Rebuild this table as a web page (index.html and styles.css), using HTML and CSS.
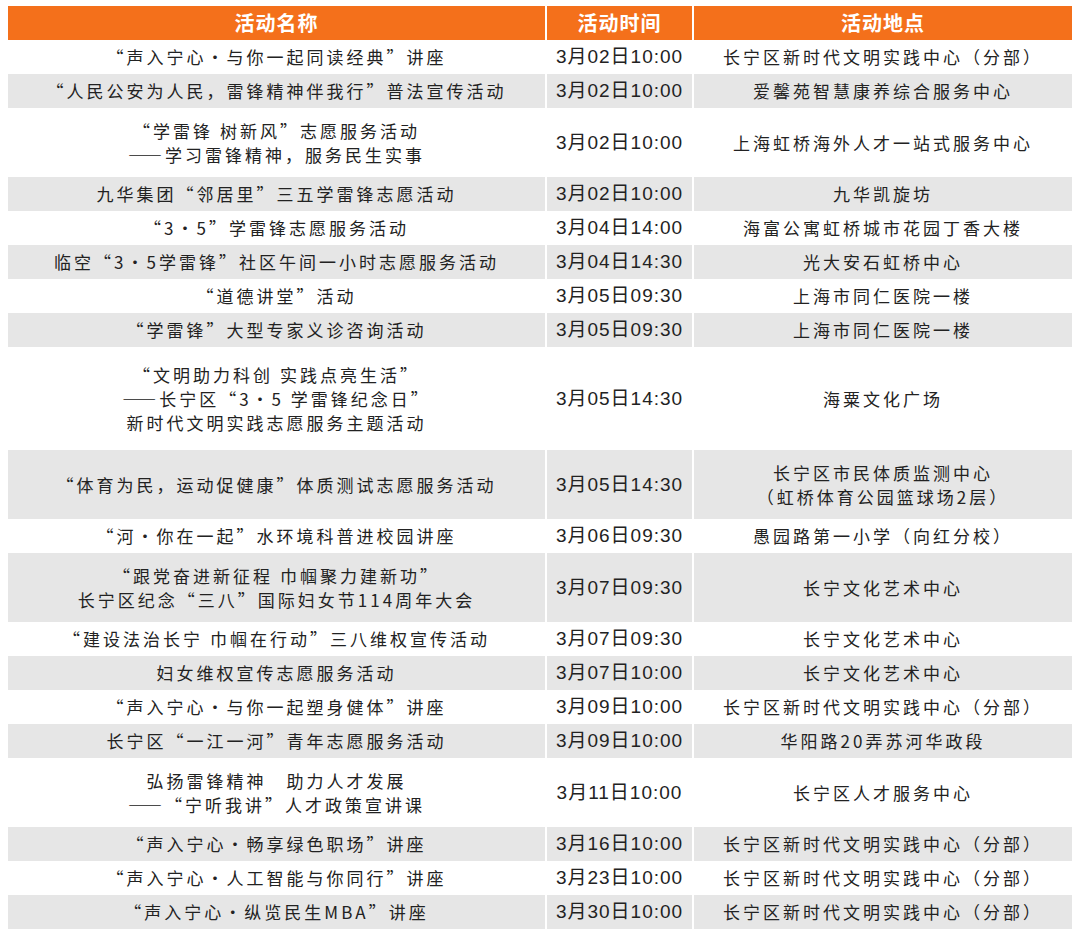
FILE: index.html
```html
<!DOCTYPE html>
<html lang="zh-CN">
<head>
<meta charset="utf-8">
<title>活动安排</title>
<link rel="stylesheet" href="styles.css">
</head>
<body>
<div class="table">
  <div class="row head">
    <div class="cell">活动名称</div>
    <div class="cell">活动时间</div>
    <div class="cell">活动地点</div>
  </div>

  <div class="row">
    <div class="cell">“声入宁心·与你一起同读经典”讲座</div>
    <div class="cell time">3月02日10:00</div>
    <div class="cell">长宁区新时代文明实践中心（分部）</div>
  </div>
  <div class="row gray">
    <div class="cell">“人民公安为人民，雷锋精神伴我行”普法宣传活动</div>
    <div class="cell time">3月02日10:00</div>
    <div class="cell">爱馨苑智慧康养综合服务中心</div>
  </div>
  <div class="row two">
    <div class="cell">“学雷锋 树新风”志愿服务活动<br>——学习雷锋精神，服务民生实事</div>
    <div class="cell time">3月02日10:00</div>
    <div class="cell">上海虹桥海外人才一站式服务中心</div>
  </div>
  <div class="row gray">
    <div class="cell">九华集团“邻居里”三五学雷锋志愿活动</div>
    <div class="cell time">3月02日10:00</div>
    <div class="cell">九华凯旋坊</div>
  </div>
  <div class="row">
    <div class="cell">“3·5”学雷锋志愿服务活动</div>
    <div class="cell time">3月04日14:00</div>
    <div class="cell">海富公寓虹桥城市花园丁香大楼</div>
  </div>
  <div class="row gray">
    <div class="cell">临空“3·5学雷锋”社区午间一小时志愿服务活动</div>
    <div class="cell time">3月04日14:30</div>
    <div class="cell">光大安石虹桥中心</div>
  </div>
  <div class="row">
    <div class="cell">“道德讲堂”活动</div>
    <div class="cell time">3月05日09:30</div>
    <div class="cell">上海市同仁医院一楼</div>
  </div>
  <div class="row gray">
    <div class="cell">“学雷锋”大型专家义诊咨询活动</div>
    <div class="cell time">3月05日09:30</div>
    <div class="cell">上海市同仁医院一楼</div>
  </div>
  <div class="row three">
    <div class="cell">“文明助力科创 实践点亮生活”<br>——长宁区“3·5 学雷锋纪念日”<br>新时代文明实践志愿服务主题活动</div>
    <div class="cell time">3月05日14:30</div>
    <div class="cell">海粟文化广场</div>
  </div>
  <div class="row gray two">
    <div class="cell">“体育为民，运动促健康”体质测试志愿服务活动</div>
    <div class="cell time">3月05日14:30</div>
    <div class="cell">长宁区市民体质监测中心<br>（虹桥体育公园篮球场2层）</div>
  </div>
  <div class="row">
    <div class="cell">“河·你在一起”水环境科普进校园讲座</div>
    <div class="cell time">3月06日09:30</div>
    <div class="cell">愚园路第一小学（向红分校）</div>
  </div>
  <div class="row gray two">
    <div class="cell">“跟党奋进新征程 巾帼聚力建新功”<br>长宁区纪念“三八”国际妇女节114周年大会</div>
    <div class="cell time">3月07日09:30</div>
    <div class="cell">长宁文化艺术中心</div>
  </div>
  <div class="row">
    <div class="cell">“建设法治长宁 巾帼在行动”三八维权宣传活动</div>
    <div class="cell time">3月07日09:30</div>
    <div class="cell">长宁文化艺术中心</div>
  </div>
  <div class="row gray">
    <div class="cell">妇女维权宣传志愿服务活动</div>
    <div class="cell time">3月07日10:00</div>
    <div class="cell">长宁文化艺术中心</div>
  </div>
  <div class="row">
    <div class="cell">“声入宁心·与你一起塑身健体”讲座</div>
    <div class="cell time">3月09日10:00</div>
    <div class="cell">长宁区新时代文明实践中心（分部）</div>
  </div>
  <div class="row gray">
    <div class="cell">长宁区“一江一河”青年志愿服务活动</div>
    <div class="cell time">3月09日10:00</div>
    <div class="cell">华阳路20弄苏河华政段</div>
  </div>
  <div class="row two">
    <div class="cell">弘扬雷锋精神　助力人才发展<br>——“宁听我讲”人才政策宣讲课</div>
    <div class="cell time">3月11日10:00</div>
    <div class="cell">长宁区人才服务中心</div>
  </div>
  <div class="row gray">
    <div class="cell">“声入宁心·畅享绿色职场”讲座</div>
    <div class="cell time">3月16日10:00</div>
    <div class="cell">长宁区新时代文明实践中心（分部）</div>
  </div>
  <div class="row">
    <div class="cell">“声入宁心·人工智能与你同行”讲座</div>
    <div class="cell time">3月23日10:00</div>
    <div class="cell">长宁区新时代文明实践中心（分部）</div>
  </div>
  <div class="row gray">
    <div class="cell">“声入宁心·纵览民生MBA”讲座</div>
    <div class="cell time">3月30日10:00</div>
    <div class="cell">长宁区新时代文明实践中心（分部）</div>
  </div>
</div>
</body>
</html>
```
FILE: styles.css
```css
html, body {
  background: #ffffff;
}
body {
  margin: 6px 8px;
  font-family: "Noto Sans CJK SC", "Noto Sans", sans-serif;
  color: #222222;
}
.table {
  width: 1064px;
  display: flex;
  flex-direction: column;
}
.row {
  display: grid;
  grid-template-columns: 537px 145px 378px;
  column-gap: 2px;
  height: 34px;
}
.row.two {
  height: 69px;
}
.row.three {
  height: 103px;
}
.cell {
  display: flex;
  align-items: center;
  justify-content: center;
  text-align: center;
  font-size: 17px;
  line-height: 24px;
  letter-spacing: 3px;
  font-weight: 400;
  white-space: nowrap;
}
.row.gray .cell {
  background: #e6e6e6;
}
.row.head .cell {
  background: #f4701b;
  color: #ffffff;
  font-weight: 700;
  font-size: 20px;
  letter-spacing: 1px;
}
.cell.time {
  font-family: "Liberation Sans", "Noto Sans CJK SC", sans-serif;
  font-size: 19px;
  letter-spacing: 1px;
}
```
